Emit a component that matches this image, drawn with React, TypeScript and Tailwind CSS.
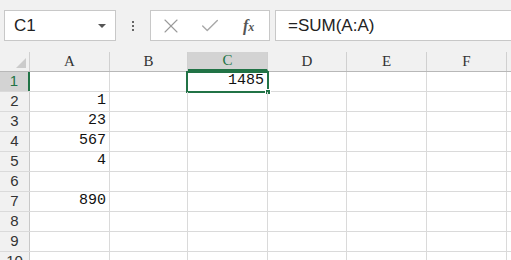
import { X, Check } from "lucide-react";

const cols = [
  { name: "A", w: "w-[80px]" },
  { name: "B", w: "w-[78px]" },
  { name: "C", w: "w-[80px]" },
  { name: "D", w: "w-[79px]" },
  { name: "E", w: "w-[80px]" },
  { name: "F", w: "w-[80px]" },
];

const values: Record<string, string> = {
  A2: "1",
  A3: "23",
  A4: "567",
  A5: "4",
  A7: "890",
  C1: "1485",
};

const rows = [1, 2, 3, 4, 5, 6, 7, 8, 9, 10];

export default function App() {
  return (
    <div className="w-[511px] h-[260px] overflow-hidden bg-white font-['Liberation_Sans',sans-serif]">
      {/* formula bar */}
      <div className="h-[52px] bg-[#f1f1f1] flex items-start pt-[10px]">
        <div className="ml-[4px] w-[112px] h-[31px] bg-white border border-[#c8c8c8] flex items-center justify-between pl-[9px] pr-[9px]">
          <span className="text-[17px] text-[#222]">C1</span>
          <span className="w-0 h-0 border-l-[4px] border-r-[4px] border-t-[4px] border-l-transparent border-r-transparent border-t-[#555]" />
        </div>
        <div className="w-[34px] h-[31px] flex flex-col items-center justify-center gap-[2px]">
          <span className="w-[2px] h-[2px] bg-[#666]" />
          <span className="w-[2px] h-[2px] bg-[#666]" />
          <span className="w-[2px] h-[2px] bg-[#666]" />
        </div>
        <div className="w-[120px] h-[31px] bg-white border border-[#c8c8c8] flex items-center">
          <X size={24} strokeWidth={1.1} className="ml-[8px] text-[#9a9a9a]" />
          <Check size={22} strokeWidth={1.5} className="ml-[16px] text-[#a8a8a8]" />
          <span className="ml-[22px] text-[16px] italic font-bold font-['Liberation_Serif',serif] text-[#555]">
            f<span className="text-[12px]">x</span>
          </span>
        </div>
        <div className="ml-[5px] flex-1 h-[31px] bg-white border border-r-0 border-[#c8c8c8] flex items-center pl-[12px]">
          <span className="text-[17px] text-[#222]">=SUM(A:A)</span>
        </div>
      </div>

      {/* column headers */}
      <div className="flex h-[20px] bg-[#f1f1f1] border-b border-[#b8b8b8]">
        <div className="w-[30px] shrink-0 border-r border-[#d0d0d0] flex items-end justify-end pr-[3px] pb-[3px]">
          <svg width="10" height="10" viewBox="0 0 10 10">
            <polygon points="10,0 10,10 0,10" fill="#cbcbcb" />
          </svg>
        </div>
        {cols.map((c) => (
          <div
            key={c.name}
            className={`${c.w} shrink-0 border-r border-[#d0d0d0] flex items-center justify-center text-[15px] font-['Liberation_Serif',serif] ${
              c.name === "C" ? "bg-[#d3d3d3] text-[#217346] border-b-2 border-b-[#217346]" : "text-[#333]"
            }`}
          >
            {c.name}
          </div>
        ))}
        <div className="flex-1" />
      </div>

      {/* rows */}
      {rows.map((r) => (
        <div key={r} className="flex h-[20px] border-b border-[#dadada]">
          <div
            className={`w-[30px] shrink-0 flex items-center justify-center text-[15px] ${
              r === 1
                ? "bg-[#d3d3d3] text-[#217346] border-r-2 border-[#217346]"
                : "bg-[#f1f1f1] text-[#333] border-r border-[#c8c8c8]"
            }`}
          >
            {r}
          </div>
          {cols.map((c) => {
            const key = `${c.name}${r}`;
            const selected = key === "C1";
            return (
              <div
                key={key}
                className={`${c.w} shrink-0 border-r border-[#dadada] relative flex items-center justify-end pr-[3px] text-[15px] text-[#111] font-['Liberation_Mono',monospace]`}
              >
                {values[key]}
                {selected && (
                  <>
                    <div className="absolute left-[-2px] top-[-1px] right-[-2px] bottom-[-2px] border-2 border-[#217346]" />
                    <div className="absolute right-[-4px] bottom-[-4px] w-[6px] h-[6px] bg-[#217346] border border-white" />
                  </>
                )}
              </div>
            );
          })}
          <div className="flex-1" />
        </div>
      ))}
    </div>
  );
}
